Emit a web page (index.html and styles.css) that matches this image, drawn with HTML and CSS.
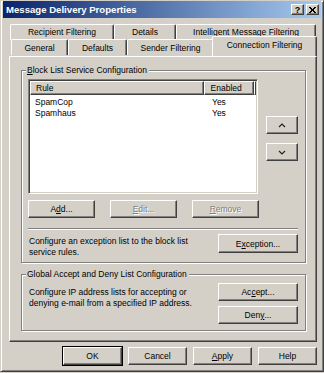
FILE: index.html
```html
<!DOCTYPE html>
<html lang="en">
<head>
  <meta charset="UTF-8" />
  <meta name="viewport" content="width=device-width, initial-scale=1.0" />
  <title>Message Delivery Properties</title>
  <link rel="stylesheet" href="styles.css">
</head>
<body>
  <div class="window">
    <div class="titlebar">
      <span class="title">Message Delivery Properties</span>
      <div class="caption-btns">
        <button class="cap-btn">?</button>
        <button class="cap-btn close">
          <svg width="7" height="6" viewBox="0 0 7 6"><path d="M0 0L6 6M1 0L7 6M6 0L0 6M7 0L1 6" stroke="#000" stroke-width="1" fill="none"/></svg>
        </button>
      </div>
    </div>

    <div class="tabs">
      <div class="tab-row back">
        <div class="tab t-recipient">Recipient Filtering</div>
        <div class="tab t-details">Details</div>
        <div class="tab t-intel">Intelligent Message Filtering</div>
      </div>
      <div class="tab-row front">
        <div class="tab t-general">General</div>
        <div class="tab t-defaults">Defaults</div>
        <div class="tab t-sender">Sender Filtering</div>
        <div class="tab t-conn active">Connection Filtering</div>
      </div>
    </div>

    <div class="panel">
      <div class="group block-group">
        <span class="legend"><u>B</u>lock List Service Configuration</span>
        <div class="list-area">
          <div class="listview">
            <div class="lv-head">
              <div class="lv-col rule">Rule</div>
              <div class="lv-col enabled">Enabled</div>
              <div class="lv-col rest"></div>
            </div>
            <div class="lv-row"><span class="rule">SpamCop</span><span>Yes</span></div>
            <div class="lv-row"><span class="rule">Spamhaus</span><span>Yes</span></div>
          </div>
          <div class="arrows">
            <button class="btn arrow">
              <svg width="8" height="5" viewBox="0 0 8 5"><path d="M1 4L4 1L7 4" stroke="#222" stroke-width="1.2" fill="none"/></svg>
            </button>
            <button class="btn arrow">
              <svg width="8" height="5" viewBox="0 0 8 5"><path d="M1 1L4 4L7 1" stroke="#222" stroke-width="1.2" fill="none"/></svg>
            </button>
          </div>
        </div>
        <div class="btn-row">
          <button class="btn list-btn">A<u>d</u>d...</button>
          <button class="btn list-btn" disabled><u>E</u>dit...</button>
          <button class="btn list-btn" disabled><u>R</u>emove</button>
        </div>
        <div class="sep"></div>
        <div class="desc-row">
          <p>Configure an exception list to the block list service rules.</p>
          <button class="btn side-btn">E<u>x</u>ception...</button>
        </div>
      </div>

      <div class="group global-group">
        <span class="legend">Global Accept and Deny List Configuration</span>
        <div class="desc-row">
          <p>Configure IP address lists for accepting or denying e-mail from a specified IP address.</p>
          <div class="side-col">
            <button class="btn side-btn">Ac<u>c</u>ept...</button>
            <button class="btn side-btn">Den<u>y</u>...</button>
          </div>
        </div>
      </div>
    </div>

    <div class="footer">
      <button class="btn foot-btn default">OK</button>
      <button class="btn foot-btn">Cancel</button>
      <button class="btn foot-btn"><u>A</u>pply</button>
      <button class="btn foot-btn">Help</button>
    </div>
  </div>
</body>
</html>
```

FILE: styles.css
```css
* {
  box-sizing: border-box;
}
body {
  margin: 0;
  width: 324px;
  height: 373px;
  overflow: hidden;
  background: #d4d0c8;
  font-family: 'Liberation Sans', Arial, sans-serif;
  font-size: 8.5px;
  color: #000;
}
button {
  font-family: inherit;
  font-size: inherit;
  color: #000;
  padding: 0;
  margin: 0;
  background: #d4d0c8;
}
u {
  text-decoration: underline;
  text-underline-offset: 1px;
}
p {
  margin: 0;
}

.window {
  width: 324px;
  height: 372px;
  border: 1px solid;
  border-color: #d4d0c8 #404040 #404040 #d4d0c8;
  box-shadow: inset 1px 1px #fff, inset -1px -1px #808080;
  padding: 0 2px 1px;
}

/* title bar */
.titlebar {
  height: 17px;
  display: flex;
  align-items: center;
  justify-content: space-between;
  padding: 0 2px 0 3px;
  background: linear-gradient(to right, #0a246a, #a6caf0);
}
.title {
  color: #fff;
  font-weight: bold;
  font-size: 9.6px;
}
.caption-btns {
  display: flex;
  gap: 2px;
}
.cap-btn {
  width: 13px;
  height: 11px;
  border: 1px solid;
  border-color: #fff #404040 #404040 #fff;
  box-shadow: inset -1px -1px #808080;
  font-weight: bold;
  font-size: 9px;
  line-height: 8px;
  display: flex;
  align-items: center;
  justify-content: center;
}

/* tabs */
.tabs {
  height: 38px;
  padding: 6px 0 0 6px;
}
.tab-row {
  display: flex;
}
.tab {
  display: flex;
  align-items: center;
  justify-content: center;
  background: #d4d0c8;
  border-top: 1px solid #fff;
  border-left: 1px solid #fff;
  border-right: 1px solid #404040;
  box-shadow: inset -1px 0 #808080;
  border-radius: 2px 2px 0 0;
  white-space: nowrap;
}
.tab-row.back {
  height: 15px;
  padding-left: 1px;
}
.tab-row.back .tab {
  height: 16px;
  padding-bottom: 2px;
}
.tab-row.front {
  height: 16px;
  padding-left: 2px;
}
.tab-row.front .tab {
  height: 16px;
}
.t-recipient { width: 104px; }
.t-details { width: 62px; }
.t-intel { width: 140px; }
.t-general { width: 57px; }
.t-defaults { width: 59px; }
.t-sender { width: 87px; }
.t-conn { width: 103px; }
.tab-row.front .tab.active {
  position: relative;
  z-index: 2;
  height: 20px;
  width: 105px;
  margin: -3px -2px 0 -2px;
  padding-bottom: 4px;
}

/* panel */
.panel {
  width: 308px;
  height: 286px;
  margin-left: 6px;
  border: 1px solid;
  border-color: #fff #404040 #404040 #fff;
  box-shadow: inset -1px -1px #808080;
  padding: 13px 0 0 11px;
  position: relative;
  z-index: 1;
}

.group {
  position: relative;
  width: 285px;
  border: 1px solid #808080;
  box-shadow: inset 1px 1px #fff, 1px 1px #fff;
  padding: 0 7px 0 6px;
}
.legend {
  position: absolute;
  top: -6px;
  left: 4px;
  padding: 0 2px 0 1px;
  background: #d4d0c8;
  line-height: 11px;
  white-space: nowrap;
}
.block-group {
  height: 193px;
  padding-top: 8px;
}
.global-group {
  height: 57px;
  margin-top: 11px;
}

/* list */
.list-area {
  display: flex;
  gap: 8px;
}
.listview {
  width: 230px;
  height: 115px;
  background: #fff;
  border: 1px solid;
  border-color: #808080 #fff #fff #808080;
  box-shadow: inset 1px 1px #404040, inset -1px -1px #d4d0c8;
  padding: 1px;
}
.lv-head {
  display: flex;
  height: 14px;
}
.lv-col {
  height: 14px;
  line-height: 12px;
  padding-left: 5px;
  background: #d4d0c8;
  border: 1px solid;
  border-color: #fff #404040 #404040 #fff;
  box-shadow: inset -1px -1px #808080;
}
.lv-col.rule { width: 176px; }
.lv-col.enabled { width: 51px; padding-left: 6px; }
.lv-col.rest { flex: 1; padding: 0; }
.lv-row {
  display: flex;
  height: 11px;
  line-height: 11px;
  padding-left: 5px;
}
.lv-head + .lv-row {
  margin-top: 2px;
}
.lv-row .rule {
  width: 177px;
}

.arrows {
  display: flex;
  flex-direction: column;
  gap: 9px;
  padding-top: 37px;
}

.btn {
  border: 1px solid;
  border-color: #fff #404040 #404040 #fff;
  box-shadow: inset -1px -1px #808080;
  display: flex;
  align-items: center;
  justify-content: center;
}
.btn:disabled {
  color: #808080;
  text-shadow: 1px 1px 0 #fff;
}
.arrow {
  width: 32px;
  height: 18px;
}
.btn-row {
  display: flex;
  gap: 15px;
  margin-top: 6px;
}
.list-btn {
  width: 67px;
  height: 18px;
}
.sep {
  width: 270px;
  height: 2px;
  margin-top: 10px;
  border-top: 1px solid #808080;
  border-bottom: 1px solid #fff;
}
.desc-row {
  display: flex;
  justify-content: space-between;
  margin-top: 4px;
}
.desc-row p {
  width: 170px;
  line-height: 11px;
  padding: 2px 0 0 1px;
}
.side-btn {
  width: 80px;
  height: 19px;
}
.global-group .desc-row {
  margin-top: 0;
}
.global-group .desc-row p {
  padding-top: 12px;
}
.side-col {
  display: flex;
  flex-direction: column;
  gap: 5px;
  padding-top: 8px;
}
.side-col .side-btn {
  height: 18px;
}

/* footer */
.footer {
  display: flex;
  justify-content: flex-end;
  gap: 6px;
  padding: 5px 4px 0 0;
}
.foot-btn {
  width: 59px;
  height: 18px;
}
.foot-btn.default {
  outline: 1px solid #000;
  outline-offset: 0;
}
```
